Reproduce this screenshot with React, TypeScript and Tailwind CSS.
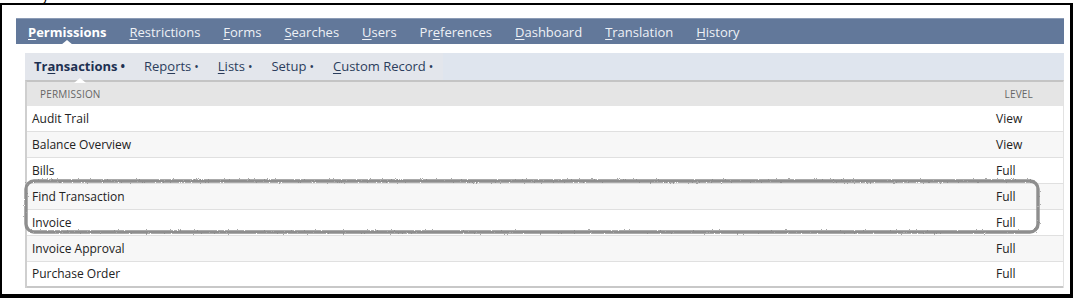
import React from "react";

const tabs: { pre: string; u: string; post: string; active?: boolean }[] = [
  { pre: "", u: "P", post: "ermissions", active: true },
  { pre: "", u: "R", post: "estrictions" },
  { pre: "", u: "F", post: "orms" },
  { pre: "", u: "S", post: "earches" },
  { pre: "", u: "U", post: "sers" },
  { pre: "Pr", u: "e", post: "ferences" },
  { pre: "", u: "D", post: "ashboard" },
  { pre: "", u: "T", post: "ranslation" },
  { pre: "", u: "H", post: "istory" },
];

const subtabs: { pre: string; u: string; post: string; active?: boolean }[] = [
  { pre: "Tr", u: "a", post: "nsactions", active: true },
  { pre: "Rep", u: "o", post: "rts" },
  { pre: "", u: "L", post: "ists" },
  { pre: "Setup", u: "", post: "" },
  { pre: "", u: "C", post: "ustom Record" },
];

const rows: [string, string][] = [
  ["Audit Trail", "View"],
  ["Balance Overview", "View"],
  ["Bills", "Full"],
  ["Find Transaction", "Full"],
  ["Invoice", "Full"],
  ["Invoice Approval", "Full"],
  ["Purchase Order", "Full"],
];

export default function App() {
  return (
    <div
      className="w-[1073px] h-[298px] bg-white flex flex-col overflow-hidden"
      style={{ fontFamily: '"Open Sans", "Noto Sans", sans-serif' }}
    >
      <div className="h-[3px] overflow-hidden relative">
        <div className="absolute left-[20px] top-[-12px] text-[14px] leading-[14px] text-black">
          ively.
        </div>
      </div>
      <div className="flex-1 border-t-2 border-l-2 border-r-[3px] border-b-[4px] border-black pt-[13px] pl-[14px] pr-[6px] relative">
        {/* main tabs */}
        <div className="h-[26px] bg-[#62789a] border-t border-[#8b9bb5] flex items-center pl-[12px] gap-[23px]">
          {tabs.map((t, i) => (
            <div
              key={i}
              className={
                "relative text-[13px] leading-[24px] " +
                (t.active ? "font-bold text-white" : "text-[#eef1f6]")
              }
            >
              {t.pre}
              <span className="underline underline-offset-2 decoration-1">{t.u}</span>
              {t.post}
              {t.active && (
                <div className="absolute left-1/2 -translate-x-1/2 bottom-[-1px] w-0 h-0 border-l-[6px] border-r-[6px] border-b-[5px] border-l-transparent border-r-transparent border-b-white" />
              )}
            </div>
          ))}
        </div>
        {/* sub tabs */}
        <div className="ml-[9px] mt-[9px]">
          <div className="h-[27px] bg-[#dfe5ee] flex">
            <div className="flex items-center bg-[#e3e6ec] pl-[9px] pr-[10px] gap-[19px]">
              {subtabs.map((t, i) => (
                <div
                  key={i}
                  className={
                    "relative text-[13px] leading-[24px] whitespace-nowrap " +
                    (t.active ? "font-bold text-[#1e3152]" : "text-[#2b3d5c]")
                  }
                >
                  {t.pre}
                  {t.u && <span className="underline underline-offset-2 decoration-1">{t.u}</span>}
                  {t.post}
                  <span className="ml-[3px] text-[12px]">•</span>
                  {t.active && (
                    <div className="absolute left-1/2 -translate-x-1/2 bottom-[-4px] w-0 h-0 border-l-[6px] border-r-[6px] border-b-[5px] border-l-transparent border-r-transparent border-b-white" />
                  )}
                </div>
              ))}
            </div>
          </div>
          <div className="border-t-2 border-[#c4c4c4] border-l-2 border-l-[#cfcfcf] border-r border-r-[#e2e2e2]">
            <div className="h-[24px] bg-[#e5e5e5] flex items-center justify-between pl-[13px] pr-[30px] text-[10px] text-[#666] uppercase tracking-[0.2px]">
              <span>Permission</span>
              <span>Level</span>
            </div>
            {rows.map(([name, lvl], i) => (
              <div
                key={i}
                className={
                  "h-[26px] flex items-center justify-between pl-[5px] pr-[33px] text-[12px] text-[#222] border-b border-[#e0e0e0] " +
                  (i % 2 === 1 ? "bg-[#f7f7f7]" : "bg-white") +
                  (i === rows.length - 1 ? " border-b-2 border-b-[#c8c8c8]" : "")
                }
              >
                <span>{name}</span>
                <span className="w-[34px] text-left">{lvl}</span>
              </div>
            ))}
          </div>
        </div>
        {/* hand-drawn highlight */}
        <svg
          className="absolute left-[21px] top-[173px] pointer-events-none"
          width="1020"
          height="58"
          viewBox="0 0 1020 58"
        >
          <defs>
            <filter id="rough" x="-2%" y="-15%" width="104%" height="130%">
              <feTurbulence type="fractalNoise" baseFrequency="1.3" numOctaves="2" seed="7" result="noise" />
              <feDisplacementMap in="SourceGraphic" in2="noise" scale="2.2" />
            </filter>
          </defs>
          <rect
            x="3"
            y="3"
            width="1012"
            height="51"
            rx="8"
            ry="8"
            fill="none"
            stroke="#8e8e8e"
            strokeWidth="3.4"
            filter="url(#rough)"
          />
        </svg>
      </div>
    </div>
  );
}
